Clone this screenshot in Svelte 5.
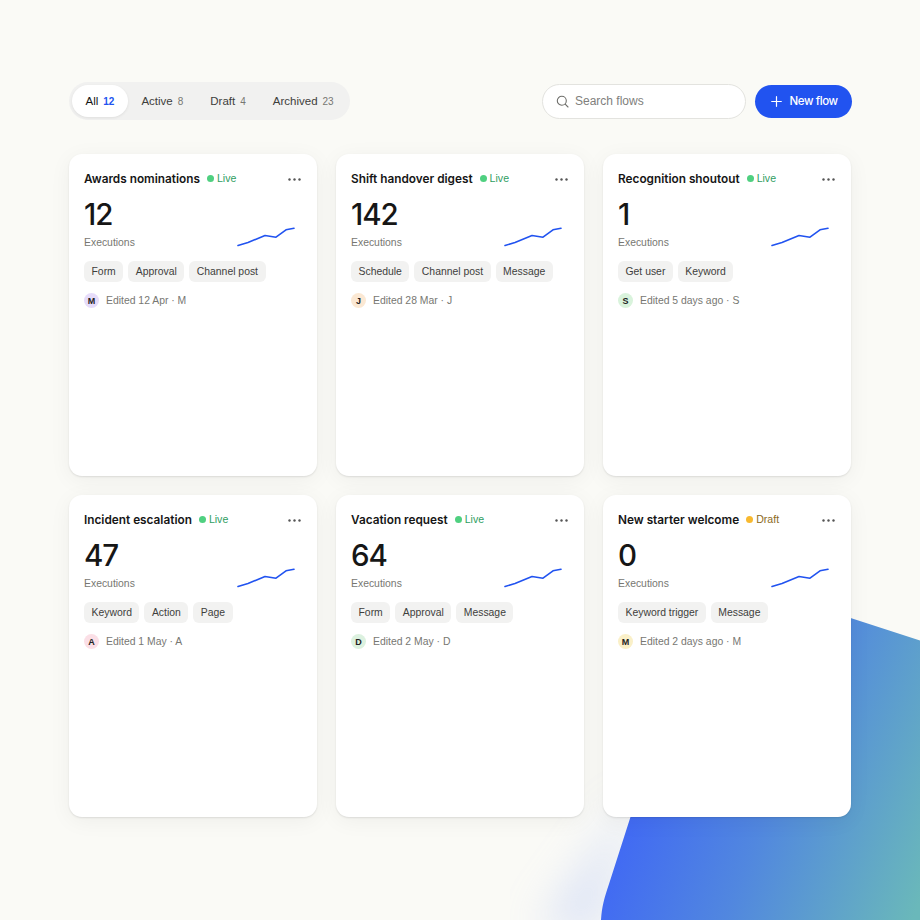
<script>
  const tabs = [
    { label: "All", count: 12, active: true },
    { label: "Active", count: 8 },
    { label: "Draft", count: 4 },
    { label: "Archived", count: 23 },
  ];

  const flows = [
    { name: "Awards nominations", status: "Live", count: 12, tags: ["Form", "Approval", "Channel post"], edited: "12 Apr", who: "M", tone: "#e6dcfa" },
    { name: "Shift handover digest", status: "Live", count: 142, tags: ["Schedule", "Channel post", "Message"], edited: "28 Mar", who: "J", tone: "#fbe8d3" },
    { name: "Recognition shoutout", status: "Live", count: 1, tags: ["Get user", "Keyword"], edited: "5 days ago", who: "S", tone: "#d9f3dc" },
    { name: "Incident escalation", status: "Live", count: 47, tags: ["Keyword", "Action", "Page"], edited: "1 May", who: "A", tone: "#fbdfe6" },
    { name: "Vacation request", status: "Live", count: 64, tags: ["Form", "Approval", "Message"], edited: "2 May", who: "D", tone: "#dcf1df" },
    { name: "New starter welcome", status: "Draft", count: 0, tags: ["Keyword trigger", "Message"], edited: "2 days ago", who: "M", tone: "#faf0c8" },
  ];
</script>

<svg class="blob" width="920" height="920" viewBox="0 0 920 920" aria-hidden="true">
  <defs>
    <linearGradient id="blobfill" gradientUnits="userSpaceOnUse" x1="620" y1="790" x2="920" y2="900">
      <stop offset="0" stop-color="#3f66f6" />
      <stop offset="0.45" stop-color="#5187df" />
      <stop offset="1" stop-color="#6ab8ba" />
    </linearGradient>
    <filter id="glow" x="-30%" y="-30%" width="160%" height="160%">
      <feGaussianBlur stdDeviation="22" />
    </filter>
  </defs>
  <path d="M640 790 L606 890 Q601 905 601 930 L540 930 Z" fill="#bccbf5" opacity="0.55" filter="url(#glow)" />
  <path d="M709 572 L940 647 L940 920 L601 920 C602 906 604 899 609 884 Z" fill="url(#blobfill)" />
</svg>

<main class="page">
  <header class="toolbar">
    <nav class="tabs">
      {#each tabs as tab}
        <span class="tab" class:active={tab.active}>
          {tab.label}<span class="count">{tab.count}</span>
        </span>
      {/each}
    </nav>
    <div class="actions">
      <label class="search">
        <svg width="13" height="13" viewBox="0 0 13 13" fill="none" stroke="#6e6e6a" stroke-width="1.1" stroke-linecap="round">
          <circle cx="5.8" cy="5.8" r="4.5" />
          <path d="M9.2 9.2 12 12" />
        </svg>
        <span>Search flows</span>
      </label>
      <button class="new">
        <svg width="11" height="11" viewBox="0 0 11 11" stroke="#fff" stroke-width="1.2" stroke-linecap="round">
          <path d="M5.5 .7v9.6M.7 5.5h9.6" />
        </svg>
        New flow
      </button>
    </div>
  </header>

  <section class="grid">
    {#each flows as flow}
      <article class="card">
        <div class="head">
          <h3>{flow.name}</h3>
          <span class="status {flow.status.toLowerCase()}"><i></i>{flow.status}</span>
          <svg class="more" width="13" height="3" viewBox="0 0 13 3" fill="#555">
            <circle cx="1.5" cy="1.5" r="1.2" /><circle cx="6.5" cy="1.5" r="1.2" /><circle cx="11.5" cy="1.5" r="1.2" />
          </svg>
        </div>
        <div class="metric">
          <div>
            <div class="num">{flow.count}</div>
            <div class="label">Executions</div>
          </div>
          <svg class="spark" width="59" height="20" viewBox="0 0 59 20" fill="none" stroke="#2153f0" stroke-width="1.6" stroke-linejoin="round" stroke-linecap="round">
            <path d="M1 18.5 L11 15.5 L28 8.5 L39 10.2 L49 2.8 L57 1.2" />
          </svg>
        </div>
        <div class="tags">
          {#each flow.tags as tag}
            <span class="tag">{tag}</span>
          {/each}
        </div>
        <div class="meta">
          <span class="avatar" style="background:{flow.tone}">{flow.who}</span>
          <span>Edited {flow.edited} · {flow.who}</span>
        </div>
      </article>
    {/each}
  </section>
</main>

<style>
  :global(body) {
    background: #fafaf6;
    font-family: "Liberation Sans", Arial, sans-serif;
    color: #161616;
  }
  .blob {
    position: absolute;
    left: 0;
    top: 0;
  }
  .page {
    position: relative;
    box-sizing: border-box;
    width: 920px;
    height: 920px;
    padding: 82px 68px 0 69px;
    overflow: hidden;
  }
  .toolbar {
    display: flex;
    justify-content: space-between;
    align-items: center;
    height: 38px;
  }
  .tabs {
    display: flex;
    align-items: center;
    height: 38px;
    box-sizing: border-box;
    padding: 0 3px;
    background: #f1f1f0;
    border-radius: 19px;
    font-size: 11.5px;
    color: #3e3e3c;
  }
  .tab {
    display: flex;
    align-items: center;
    height: 32px;
    padding: 0 13.5px;
    border-radius: 16px;
    white-space: nowrap;
  }
  .tab.active {
    background: #fff;
    color: #161616;
    box-shadow: 0 1px 3px rgba(0, 0, 0, 0.08);
  }
  .count {
    margin-left: 5px;
    font-size: 10px;
    color: #777772;
  }
  .active .count {
    color: #2153f0;
    font-weight: 700;
  }
  .actions {
    display: flex;
    align-items: center;
    gap: 9px;
  }
  .search {
    display: flex;
    align-items: center;
    gap: 6px;
    box-sizing: border-box;
    width: 204px;
    height: 35px;
    padding: 0 13px;
    background: #fff;
    border: 1px solid #e3e3df;
    border-radius: 18px;
    font-size: 12px;
    color: #80807c;
  }
  .new {
    display: flex;
    align-items: center;
    gap: 8px;
    width: 97px;
    height: 33px;
    padding: 0 0 0 15.5px;
    border: 0;
    border-radius: 17px;
    background: #2153f0;
    color: #fff;
    font: 500 11.5px Inter, "Liberation Sans", sans-serif;
    letter-spacing: -0.4px;
    white-space: nowrap;
  }
  .grid {
    display: grid;
    grid-template-columns: repeat(3, 248px);
    grid-auto-rows: 322px;
    gap: 19px;
    margin-top: 34px;
  }
  .card {
    box-sizing: border-box;
    padding: 15px;
    background: #fff;
    border-radius: 13px;
    box-shadow: 0 1px 2px rgba(0, 0, 0, 0.1), 0 4px 22px rgba(0, 0, 0, 0.05);
  }
  .head {
    display: flex;
    align-items: center;
    height: 20px;
  }
  h3 {
    margin: 0;
    font: 600 11.8px Inter, "Liberation Sans", sans-serif;
    white-space: nowrap;
  }
  .status {
    display: flex;
    align-items: center;
    gap: 3px;
    margin-left: 7px;
    margin-top: -2px;
    font-size: 10.6px;
  }
  .status i {
    width: 7px;
    height: 7px;
    border-radius: 50%;
  }
  .live {
    color: #2f9e62;
  }
  .live i {
    background: #4fd080;
  }
  .draft {
    color: #8c6a1c;
  }
  .draft i {
    background: #f8b92f;
  }
  .more {
    margin-left: auto;
    margin-right: 1px;
  }
  .metric {
    display: flex;
    justify-content: space-between;
    align-items: flex-end;
    margin-top: 8px;
  }
  .num {
    font: 500 29.5px/34px Inter, "Liberation Sans", sans-serif;
    letter-spacing: -1px;
  }
  .label {
    margin-top: 4px;
    font-size: 10.4px;
    line-height: 16px;
    color: #777772;
  }
  .spark {
    margin-right: 6px;
    margin-bottom: 4.5px;
  }
  .tags {
    display: flex;
    gap: 5px;
    margin-top: 10px;
  }
  .tag {
    display: flex;
    align-items: center;
    height: 21px;
    padding: 0 7.5px;
    background: #f2f2f1;
    border-radius: 6px;
    font-size: 10.4px;
    color: #3e3e3c;
    white-space: nowrap;
  }
  .meta {
    display: flex;
    align-items: center;
    gap: 7px;
    margin-top: 11px;
    font-size: 10.4px;
    color: #777772;
  }
  .avatar {
    display: flex;
    align-items: center;
    justify-content: center;
    width: 15px;
    height: 15px;
    border-radius: 50%;
    font-size: 9px;
    font-weight: 700;
    color: #222;
  }
</style>
